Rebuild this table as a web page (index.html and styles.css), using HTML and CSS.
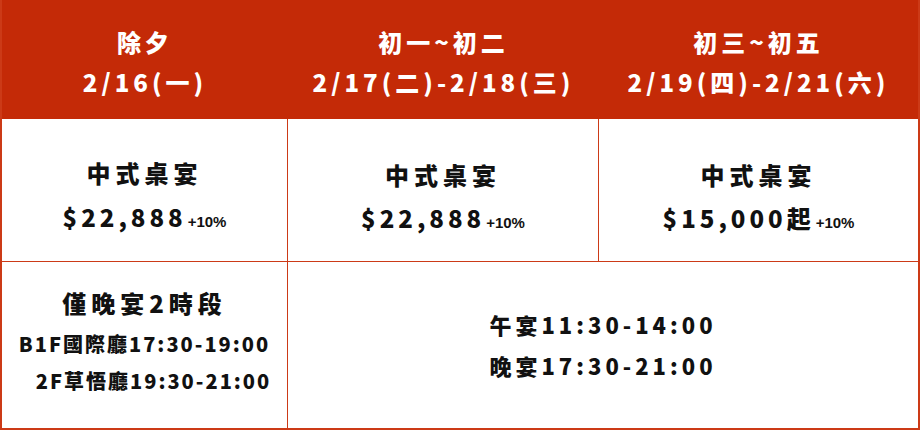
FILE: index.html
```html
<!DOCTYPE html>
<html lang="zh-Hant">
<head>
<meta charset="utf-8">
<link rel="stylesheet" href="styles.css">
</head>
<body>
<div class="table">
  <div class="cell head">
    <div class="line">除夕</div>
    <div class="line num">2/16(一)</div>
  </div>
  <div class="cell head">
    <div class="line">初一~初二</div>
    <div class="line num">2/17(二)-2/18(三)</div>
  </div>
  <div class="cell head">
    <div class="line">初三~初五</div>
    <div class="line num">2/19(四)-2/21(六)</div>
  </div>

  <div class="cell body mid up">
    <div class="title">中式桌宴</div>
    <div class="price">$22,888<span class="tax">+10%</span></div>
  </div>
  <div class="cell body mid">
    <div class="title">中式桌宴</div>
    <div class="price">$22,888<span class="tax">+10%</span></div>
  </div>
  <div class="cell body mid last">
    <div class="title">中式桌宴</div>
    <div class="price">$15,000起<span class="tax">+10%</span></div>
  </div>

  <div class="cell body bottom up2">
    <div class="title">僅晚宴2時段</div>
    <div class="slot">B1F國際廳17:30-19:00</div>
    <div class="slot indent">2F草悟廳19:30-21:00</div>
  </div>
  <div class="cell body bottom last span">
    <div class="hours">午宴11:30-14:00</div>
    <div class="hours">晚宴17:30-21:00</div>
  </div>
</div>
</body>
</html>
```

FILE: styles.css
```css
html, body {
  margin: 0;
  padding: 0;
  background: #ffffff;
}

body {
  font-family: "Noto Sans CJK TC", "Noto Sans CJK SC", sans-serif;
  font-weight: 900;
  color: #111111;
}

.table {
  width: 920px;
  height: 430px;
  box-sizing: border-box;
  display: grid;
  grid-template-columns: 286px 311px 1fr;
  grid-template-rows: 119px 143px 1fr;
  border-left: 2px solid #cc3a17;
  border-right: 2px solid #cc3a17;
  border-bottom: 2px solid #cc3a17;
}

.cell {
  display: flex;
  flex-direction: column;
  align-items: center;
  justify-content: center;
  text-align: center;
}

.head {
  background: #c42a07;
  color: #ffffff;
  padding-top: 5px;
  box-sizing: border-box;
}

.head .line {
  font-size: 24px;
  line-height: 40px;
  letter-spacing: 4px;
}

.head .num {
  letter-spacing: 4px;
}

.body {
  border-right: 1px solid #cc3a17;
  border-bottom: 1px solid #cc3a17;
  box-sizing: border-box;
}

.body.mid {
  padding-top: 17px;
}

.body.mid.up {
  padding-top: 14px;
  padding-bottom: 0;
}

.body.last {
  border-right: none;
}

.body.bottom {
  border-bottom: none;
}

.up2 {
  padding-bottom: 10px;
}

.title {
  font-size: 24px;
  line-height: 44px;
  letter-spacing: 5px;
}

.mid .title {
  line-height: 43px;
}

.up .title {
  line-height: 45px;
}

.price {
  font-size: 24px;
  line-height: 44px;
  letter-spacing: 4px;
}

.tax {
  font-size: 15px;
  letter-spacing: 0;
  margin-left: 1px;
  font-family: "Liberation Sans Narrow", "Liberation Sans", sans-serif;
  font-weight: 700;
}

.slot {
  font-size: 20px;
  line-height: 37px;
  letter-spacing: 2px;
}

.slot.indent {
  padding-left: 18px;
}

.span {
  grid-column: 2 / 4;
}

.hours {
  font-size: 22px;
  line-height: 41px;
  letter-spacing: 4px;
}
```
